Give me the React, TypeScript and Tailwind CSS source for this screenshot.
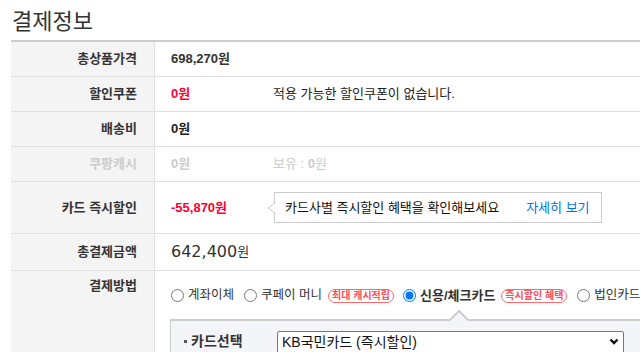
import React from 'react';

const FONT = "font-['Liberation_Sans','Noto_Sans_CJK_KR',sans-serif]";

interface RowProps {
  label: string;
  height: string;
  muted?: boolean;
  top?: boolean;
  children?: React.ReactNode;
}

const Row: React.FC<RowProps> = ({ label, height, muted, top, children }) => (
  <div className={`grid grid-cols-[144px_1fr] border-b border-[#e0e0e0] ${height}`}>
    <div
      className={`flex justify-end bg-[#f4f4f4] border-r border-[#e0e0e0] pr-[17px] text-[13px] font-bold ${
        top ? 'items-start pt-[5px]' : 'items-center'
      } ${muted ? 'text-[#cccccc]' : 'text-[#333]'}`}
    >
      {label}
    </div>
    <div className={`flex pl-4 text-[13px] ${top ? 'flex-col' : 'items-center'}`}>{children}</div>
  </div>
);

const Badge: React.FC<{ text: string }> = ({ text }) => (
  <span className="ml-[6px] inline-flex h-[14px] items-center rounded-full border border-[#ff6b6b] px-[3px] text-[10px] font-bold leading-none text-[#ff4d5a]">
    {text}
  </span>
);

const Radio: React.FC<{ label: string; checked?: boolean; bold?: boolean; gap?: string }> = ({ label, checked, bold, gap }) => (
  <label className={`flex items-center ${gap ?? ''}`}>
    <input type="radio" name="pay" readOnly checked={!!checked} className="m-0 size-[13px] accent-[#0075ff]" />
    <span className={`ml-[4px] whitespace-nowrap text-[#333] ${bold ? 'font-bold text-[13px]' : 'text-[12.5px]'}`}>{label}</span>
  </label>
);

export default function App() {
  return (
    <div className={`w-[640px] h-[352px] overflow-hidden bg-white ${FONT}`}>
      <h2 className="pl-[12px] pt-[4px] text-[22px] leading-[30px] text-[#333] font-['Noto_Sans_CJK_KR',sans-serif]">결제정보</h2>
      <div className="ml-[11px] mt-[6px] w-[720px] border-t-2 border-[#cccccc]">
        <Row label="총상품가격" height="h-[35px]">
          <span className="font-bold text-[#333]">698,270원</span>
        </Row>
        <Row label="할인쿠폰" height="h-[35px]">
          <span className="w-[102px] font-bold text-[#ff0033]">0원</span>
          <span className="text-[#222]">적용 가능한 할인쿠폰이 없습니다.</span>
        </Row>
        <Row label="배송비" height="h-[35px]">
          <span className="font-bold text-[#222]">0원</span>
        </Row>
        <Row label="쿠팡캐시" height="h-[35px]" muted>
          <span className="w-[102px] font-bold text-[#cccccc]">0원</span>
          <span className="text-[#cccccc]">
            보유 : <span className="font-bold">0</span>원
          </span>
        </Row>
        <Row label="카드 즉시할인" height="h-[52px]">
          <span className="w-[103px] font-bold text-[#ff0033]">-55,870원</span>
          <div className="relative flex h-[31px] items-center gap-[27px] border border-[#cccccc] bg-white pl-[10px] pr-[11px]">
            <svg className="absolute left-[-8px] top-[9px]" width="9" height="12" viewBox="0 0 9 12">
              <polygon points="9,0.5 1,6 9,11.5" fill="white" />
              <polyline points="8.5,0.5 1,6 8.5,11.5" fill="none" stroke="#cccccc" strokeWidth="1" />
            </svg>
            <span className="text-[#111]">카드사별 즉시할인 혜택을 확인해보세요</span>
            <span className="text-[#0073e9]">자세히 보기</span>
          </div>
        </Row>
        <Row label="총결제금액" height="h-[37px]">
          <span className="text-[16px] text-[#333] font-['DejaVu_Sans',sans-serif]">642,400</span>
          <span className="text-[13px] text-[#333]">원</span>
        </Row>
        <Row label="결제방법" height="h-[100px]" top>
          <div className="flex items-center pt-[15px]">
            <Radio label="계좌이체" />
            <Radio label="쿠페이 머니" gap="ml-[10px]" />
            <Badge text="최대 캐시적립" />
            <Radio label="신용/체크카드" checked bold gap="ml-[9px]" />
            <Badge text="즉시할인 혜택" />
            <Radio label="법인카드" gap="ml-[10px]" />
          </div>
          <div className="relative mt-[13px] -ml-[1px] flex h-[60px] items-start border-t-2 border-l border-[#cccccc] bg-[#f4f5f8] pt-[10px]">
            <svg className="absolute left-[279px] top-[-11px]" width="18" height="11" viewBox="0 0 18 11">
              <polygon points="0,11 9,1 18,11" fill="#f4f5f8" />
              <polyline points="0,10 9,1 18,10" fill="none" stroke="#cccccc" strokeWidth="2" />
            </svg>
            <div className="flex h-[22px] w-[106px] items-center pl-[13px]">
              <span className="mr-[4px] size-[3px] bg-[#555]" />
              <span className="text-[14px] font-bold text-[#333]">카드선택</span>
            </div>
            <div className="relative h-[22px] w-[347px]">
              <select
                defaultValue="kb"
                className="h-[22px] w-full appearance-none rounded-[2px] border border-[#767676] bg-white pl-[4px] text-[14px] leading-[20px] text-[#111] outline-none"
              >
                <option value="kb">KB국민카드 (즉시할인)</option>
              </select>
              <svg className="pointer-events-none absolute right-[5px] top-[7px]" width="10" height="7" viewBox="0 0 10 7">
                <polyline points="1.5,1.5 5,5 8.5,1.5" fill="none" stroke="#111" strokeWidth="2.4" />
              </svg>
            </div>
          </div>
        </Row>
      </div>
    </div>
  );
}
